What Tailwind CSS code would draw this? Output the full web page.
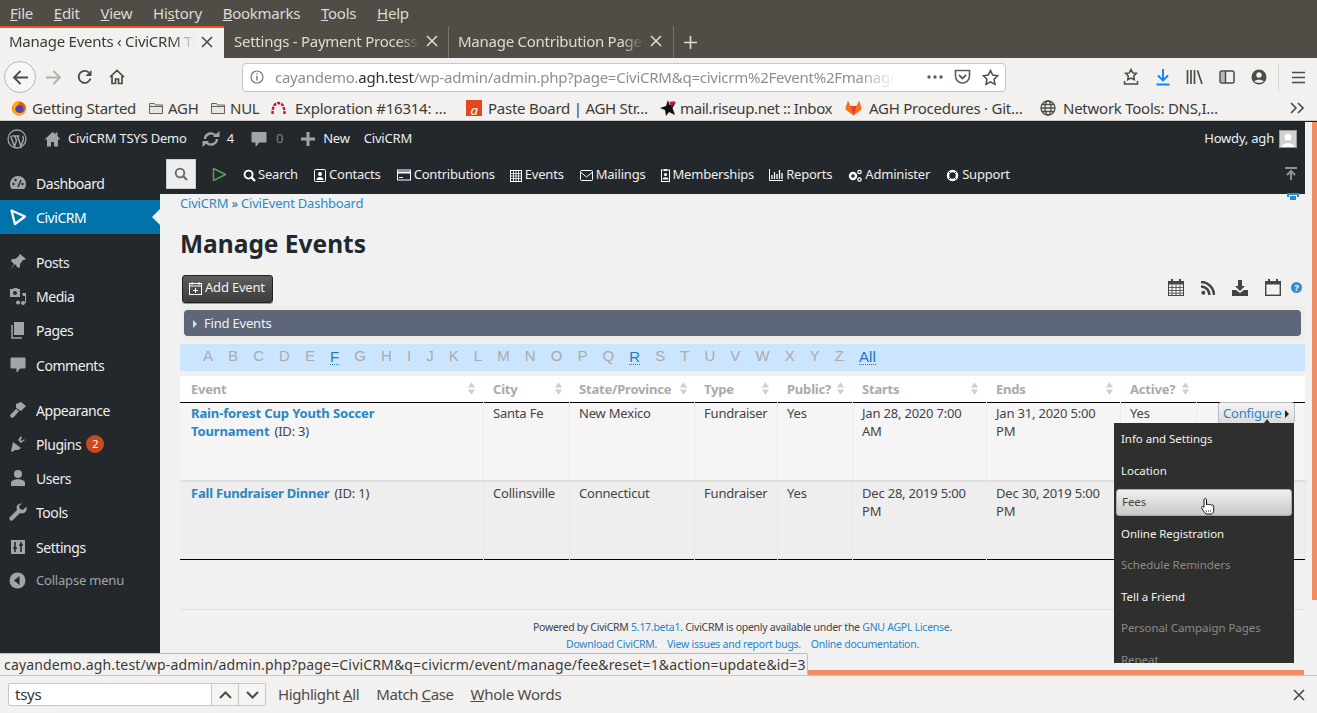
<!DOCTYPE html>
<html lang="en">
<head>
  <meta charset="UTF-8" />
  <meta name="viewport" content="width=device-width, initial-scale=1" />
  <title>Manage Events - CiviCRM TSYS Demo</title>
  <script src="https://cdn.jsdelivr.net/npm/@tailwindcss/browser@4"></script>
</head>
<body class="h-[713px] w-[1317px] overflow-hidden flex flex-col bg-[#f1f1f1] font-['Noto_Sans',sans-serif] text-[13px] tracking-[-0.2px] text-[#3e3e3e]">
  <svg class="hidden">
    <symbol id="sort" viewBox="0 0 10 16"><path d="M5 1 9 7H1zM5 15 1 9h8z" fill="#cfcfcf"/></symbol>
    <symbol id="folder" viewBox="0 0 16 16"><path d="M1.5 3.5h5l1 1.5h7v8.500h-13z" fill="#e8e6e1" stroke="#66635c"/><path d="M1.500 6.500h13" stroke="#66635c"/></symbol>
  </svg>

  <!-- Browser chrome -->
  <div class="shrink-0 bg-[#504d46]">
    <div class="h-[26px] flex items-center gap-[20.800px] pl-[10px] text-[15px] text-[#dedbd4] tracking-[-0.25px]">
      <span><u>F</u>ile</span><span><u>E</u>dit</span><span><u>V</u>iew</span><span>Hi<u>s</u>tory</span><span><u>B</u>ookmarks</span><span><u>T</u>ools</span><span><u>H</u>elp</span>
    </div>
    <div class="h-[32px] flex text-[15px] tracking-[-0.25px]">
      <div class="w-[224px] border-t-2 border-[#e95420] bg-[#f2f1ef] flex items-center pl-[9px] pr-[11px] pb-[3px] justify-between text-[#3c3b37]">
        <span class="w-[186px] overflow-hidden whitespace-nowrap [mask-image:linear-gradient(to_right,#000_88%,transparent)]">Manage Events ‹ CiviCRM TSYS Demo</span>
        <svg width="12" height="12" viewBox="0 0 12 12"><path d="M1 1l10 10M11 1 1 11" stroke="#4b4a46" stroke-width="1.600"/></svg>
      </div>
      <div class="w-[225px] border-r border-[#77746c] flex items-center pl-[10px] pr-[10px] pb-[2px] justify-between text-[#dedbd4]">
        <span class="w-[186px] overflow-hidden whitespace-nowrap [mask-image:linear-gradient(to_right,#000_88%,transparent)]">Settings - Payment Processors</span>
        <svg width="12" height="12" viewBox="0 0 12 12"><path d="M1 1l10 10M11 1 1 11" stroke="#dedbd4" stroke-width="1.600"/></svg>
      </div>
      <div class="w-[225px] border-r border-[#77746c] flex items-center pl-[9px] pr-[11px] pb-[2px] justify-between text-[#dedbd4]">
        <span class="w-[186px] overflow-hidden whitespace-nowrap [mask-image:linear-gradient(to_right,#000_88%,transparent)]">Manage Contribution Pages</span>
        <svg width="12" height="12" viewBox="0 0 12 12"><path d="M1 1l10 10M11 1 1 11" stroke="#dedbd4" stroke-width="1.600"/></svg>
      </div>
      <div class="flex items-center pl-[9px]"><svg width="15" height="15" viewBox="0 0 15 15"><path d="M7.500 1v13M1 7.500h13" stroke="#dedbd4" stroke-width="1.700"/></svg></div>
    </div>
  </div>

  <div class="shrink-0 h-[38px] bg-[#f2f1ef] flex items-center relative">
    <div class="ml-[4px] w-[32px] h-[32px] rounded-full border border-[#b9b7b2] bg-[#f8f7f6] flex items-center justify-center">
      <svg width="17" height="17" viewBox="0 0 17 17"><path d="M16 8.500H2M8.500 2 2 8.500 8.500 15" fill="none" stroke="#4c4b47" stroke-width="1.800"/></svg>
    </div>
    <svg class="ml-[9px]" width="17" height="17" viewBox="0 0 17 17"><path d="M1 8.500h14M8.500 2 15 8.500 8.500 15" fill="none" stroke="#b2b0ab" stroke-width="1.800"/></svg>
    <svg class="ml-[15px]" width="16" height="16" viewBox="0 0 16 16"><path d="M13.500 9.500A6 6 0 1 1 11.800 3.500" fill="none" stroke="#4c4b47" stroke-width="1.800"/><path d="M14.500 1v6h-6z" fill="#4c4b47"/></svg>
    <svg class="ml-[16px]" width="16" height="16" viewBox="0 0 16 16"><path d="M1 8 8 1.500 15 8M3 7v7.500h3.500V10h3v4.500H13V7" fill="none" stroke="#4c4b47" stroke-width="1.700"/></svg>
    <div class="ml-[117px] w-[764px] h-[29px] bg-white border border-[#c8c6c1] rounded-[4px] flex items-center text-[15px] tracking-[-0.25px] text-[#8f8e8a]">
      <svg class="ml-[7px] shrink-0" width="14" height="14" viewBox="0 0 14 14"><circle cx="7" cy="7" r="6" fill="none" stroke="#77766f" stroke-width="1.200"/><path d="M7 6v4.500M7 3.500v1.300" stroke="#77766f" stroke-width="1.400"/></svg>
      <span class="ml-[11px] w-[620px] overflow-hidden whitespace-nowrap [mask-image:linear-gradient(to_right,#000_94%,transparent)]">cayandemo.<span class="text-[#2f2f2c]">agh.test</span>/wp-admin/admin.php?page=CiviCRM&amp;q=civicrm%2Fevent%2Fmanage&amp;reset=1</span>
      <svg class="ml-[32px] shrink-0" width="16" height="4" viewBox="0 0 16 4"><circle cx="2" cy="2" r="1.700" fill="#5b5a55"/><circle cx="8" cy="2" r="1.700" fill="#5b5a55"/><circle cx="14" cy="2" r="1.700" fill="#5b5a55"/></svg>
      <svg class="ml-[11px] shrink-0" width="17" height="16" viewBox="0 0 17 16"><path d="M1.500 1.500h14V7a7 7 0 0 1-14 0z" fill="none" stroke="#5b5a55" stroke-width="1.600"/><path d="M5 6l3.500 3.500L12 6" fill="none" stroke="#5b5a55" stroke-width="1.800"/></svg>
      <svg class="ml-[11px] shrink-0" width="17" height="17" viewBox="0 0 17 17"><path d="M8.500 1.500l2.200 4.600 5 .7-3.600 3.500.9 5-4.500-2.400L4 15.300l.9-5L1.300 6.800l5-.7z" fill="none" stroke="#4c4b47" stroke-width="1.500"/></svg>
    </div>
    <svg class="ml-[117px]" width="16" height="18" viewBox="0 0 16 18"><path d="M8 1.500l1.700 3.400 3.700.5-2.700 2.600.6 3.700L8 10l-3.300 1.700.6-3.700L2.600 5.400l3.700-.5z" fill="none" stroke="#4c4b47" stroke-width="1.500"/><path d="M1.500 13v3h13v-3" fill="none" stroke="#4c4b47" stroke-width="1.500"/></svg>
    <svg class="ml-[16px]" width="16" height="18" viewBox="0 0 16 18"><path d="M8 1v11M3 7.500 8 12.500l5-5" fill="none" stroke="#0a84ff" stroke-width="1.900"/><path d="M1.500 16.500h13" stroke="#0a84ff" stroke-width="2"/></svg>
    <svg class="ml-[15px]" width="17" height="16" viewBox="0 0 17 16"><path d="M1.500 1v14M5 1v14M8.500 1v14M11.500 1.500l4.500 13.500" stroke="#4c4b47" stroke-width="1.700" fill="none"/></svg>
    <svg class="ml-[16px]" width="16" height="14" viewBox="0 0 16 14"><rect x="1" y="1" width="14" height="12" rx="2" fill="none" stroke="#4c4b47" stroke-width="1.500"/><path d="M2 2h4v10H2z" fill="#4c4b47" opacity=".35"/><path d="M6.500 1v12" stroke="#4c4b47" stroke-width="1.500"/></svg>
    <svg class="ml-[16px]" width="16" height="16" viewBox="0 0 16 16"><circle cx="8" cy="8" r="7.500" fill="#4c4b47"/><circle cx="8" cy="6" r="2.700" fill="#f2f1ef"/><path d="M3.300 12.500C4.500 10 11.500 10 12.700 12.500 11 14.300 5 14.300 3.300 12.500z" fill="#f2f1ef"/></svg>
    <div class="ml-[11px] w-px h-[28px] bg-[#d6d4cf]"></div>
    <svg class="ml-[13px]" width="13" height="13" viewBox="0 0 13 13"><path d="M0 1.500h13M0 6.500h13M0 11.500h13" stroke="#4c4b47" stroke-width="1.700"/></svg>
  </div>

  <div class="shrink-0 h-[25px] bg-[#f2f1ef] border-b border-[#cfcdc8] flex items-center whitespace-nowrap text-[15px] tracking-[-0.25px] text-[#3c3b37] relative">
    <svg class="ml-[11px]" width="16" height="16" viewBox="0 0 16 16"><circle cx="8" cy="8.500" r="7" fill="#e66000"/><circle cx="8.500" cy="9" r="4" fill="#5a3eb8"/><path d="M2 5C3 1 8 0 10 1c-2 .5-2.500 2-2.500 3S4 7 4 9 6 13 9 13c3 0 5-2 5-5 1 3-1 7-6 7.500C3 15.500 0 10 2 5z" fill="#ffb000"/></svg>
    <span class="ml-[5px] w-[116px]">Getting Started</span>
    <svg width="16" height="16"><use href="#folder"/></svg>
    <span class="ml-[4px] w-[42px]">AGH</span>
    <svg width="16" height="16"><use href="#folder"/></svg>
    <span class="ml-[4px] w-[41px]">NUL</span>
    <svg width="15" height="14" viewBox="0 0 15 14"><path d="M1.500 13C1.500 5 4 2 7.500 2S13.500 5 13.500 13" fill="none" stroke="#c8102e" stroke-width="2.400" stroke-dasharray="3 1.200"/></svg>
    <span class="ml-[9px] w-[171px]">Exploration #16314: …</span>
    <svg width="16" height="16" viewBox="0 0 16 16"><rect width="16" height="16" fill="#e0491a"/><text x="8" y="15" font-size="13" font-style="italic" fill="#fff" text-anchor="middle">a</text></svg>
    <span class="ml-[6px] w-[172px]">Paste Board | AGH Str…</span>
    <svg width="16" height="16" viewBox="0 0 16 16"><path d="M8 0l1.500 5L16 2l-3.500 6L15 15 9 12l-3 4-1-6-5-2 6-2z" fill="#111"/><path d="M9 2l6-1-3 6z" fill="#d6123c"/></svg>
    <span class="ml-[4px] w-[165px] tracking-[-0.4px]">mail.riseup.net :: Inbox</span>
    <svg width="17" height="16" viewBox="0 0 17 16"><path d="M8.500 15.500 1 10 .500 7.500 3 .500 5.500 6h6L14 .500l2.500 7L16 10z" fill="#fc6d26"/><path d="M8.500 15.500 5.500 6h6z" fill="#e24329"/></svg>
    <span class="ml-[7px] w-[171px]">AGH Procedures · Git…</span>
    <svg width="16" height="16" viewBox="0 0 16 16" fill="none" stroke="#4c4b47" stroke-width="1.300"><circle cx="8" cy="8" r="7"/><ellipse cx="8" cy="8" rx="3" ry="7"/><path d="M1 8h14M2 4.500h12M2 11.500h12"/></svg>
    <span class="ml-[7px] w-[227px]">Network Tools: DNS,I…</span>
    <svg width="14" height="12" viewBox="0 0 14 12"><path d="M1 1l5 5-5 5M8 1l5 5-5 5" fill="none" stroke="#4c4b47" stroke-width="1.600"/></svg>
  </div>

  <!-- Page viewport -->
  <div class="relative flex-1 min-h-0 overflow-hidden border-t border-[#1c1c1c] flex flex-col">
    <!-- WP admin bar -->
    <div class="shrink-0 h-[32px] w-[1305px] bg-[#23282d] flex items-center pt-[1px] text-[#eeeeee] whitespace-nowrap">
      <svg class="ml-[7px]" width="20" height="20" viewBox="0 0 20 20"><circle cx="10" cy="10" r="9" fill="none" stroke="#a0a5aa" stroke-width="1.300"/><path d="M3.500 7 7.500 17.500 9.500 11.500 8 7.500M8 7H5M7.500 7h5M10.500 7l3.500 10.500 2.300-7c.5-1.700-.3-3-1-3.500" fill="none" stroke="#a0a5aa" stroke-width="1.500"/></svg>
      <svg class="ml-[17px]" width="17" height="16" viewBox="0 0 17 16"><path d="M8.500 1 0.500 8.500h2.500V15.500h4v-4.500h3v4.500h4V8.500h2.500L13.500 5V1.500h-2v1.700z" fill="#a0a5aa"/></svg>
      <span class="ml-[7px]">CiviCRM TSYS Demo</span>
      <svg class="ml-[15px]" width="18" height="16" viewBox="0 0 18 16"><path d="M3 8a6 6 0 0 1 10.500-3.500M15 8a6 6 0 0 1-10.500 3.500" fill="none" stroke="#a0a5aa" stroke-width="2.400"/><path d="M11 6h6.500V0zM7 10H.5v6z" fill="#a0a5aa"/></svg>
      <span class="ml-[7px]">4</span>
      <svg class="ml-[17px]" width="16" height="16" viewBox="0 0 16 16"><path d="M1 1.500h14V11H8l-3 4v-4H1z" fill="#a0a5aa" stroke="#a0a5aa" stroke-linejoin="round"/></svg>
      <span class="ml-[9px] text-[#7d8287]">0</span>
      <svg class="ml-[18px]" width="14" height="14" viewBox="0 0 14 14"><path d="M7 0v14M0 7h14" stroke="#a0a5aa" stroke-width="3"/></svg>
      <span class="ml-[8px]">New</span>
      <span class="ml-[14px]">CiviCRM</span>
      <span class="ml-auto">Howdy, agh</span>
      <div class="ml-[5px] mr-[8px] w-[18px] h-[18px] bg-[#d0d0d0] border border-[#999] flex items-end justify-center overflow-hidden">
        <svg width="14" height="15" viewBox="0 0 14 15"><circle cx="7" cy="5" r="3.500" fill="#fff"/><path d="M1 15c0-5 12-5 12 0z" fill="#fff"/></svg>
      </div>
    </div>

    <div class="flex flex-1 min-h-0">
      <!-- Sidebar -->
      <nav class="w-[160px] shrink-0 bg-[#23282d] pt-[12px] text-[14px] tracking-[-0.45px] text-[#eeeeee] whitespace-nowrap">
        <a class="h-[34px] flex items-center gap-[9px] pl-[9px]"><svg width="18" height="18" viewBox="0 0 18 18"><path d="M9 2a8 8 0 0 0-8 8c0 2 .7 3.700 1.700 5h12.600A8 8 0 0 0 17 10a8 8 0 0 0-8-8z" fill="#a0a5aa"/><path d="M9 13 12 6" stroke="#23282d" stroke-width="1.500"/><circle cx="4.500" cy="10" r="1.200" fill="#23282d"/><circle cx="6.500" cy="6" r="1.200" fill="#23282d"/><circle cx="13.500" cy="10" r="1.200" fill="#23282d"/></svg>Dashboard</a>
        <a class="relative h-[34px] flex items-center gap-[9px] pl-[9px] bg-[#0073aa] text-white"><svg width="18" height="18" viewBox="0 0 18 18"><path d="M2.500 2.500 16 8.500 6 16z" fill="none" stroke="#fff" stroke-width="2.300" stroke-linejoin="round"/></svg>CiviCRM<span class="absolute right-0 top-[9px] border-y-[8px] border-r-[8px] border-y-transparent border-r-[#f1f1f1]"></span></a>
        <a class="mt-[11px] h-[34px] flex items-center gap-[9px] pl-[9px]"><svg width="18" height="18" viewBox="0 0 18 18"><path d="M11 1l6 5-2 1-1 0-3 4 0 3-2 1-3-4-5 6 4-6-3-3 1-2 3 0 4-3 0-1z" fill="#a0a5aa"/></svg>Posts</a>
        <a class="h-[34px] flex items-center gap-[9px] pl-[9px]"><svg width="18" height="18" viewBox="0 0 18 18"><path d="M1 2h3l1-1h3l1 1h2v8H1z" fill="#a0a5aa"/><circle cx="6" cy="6" r="2" fill="#23282d"/><path d="M13 6h4v10h-1v-7h-2zM9 13.500a2 2 0 1 0 .1 0zM14 14a2 2 0 1 0 .1 0z" fill="#a0a5aa"/></svg>Media</a>
        <a class="h-[34px] flex items-center gap-[9px] pl-[9px]"><svg width="18" height="18" viewBox="0 0 18 18"><path d="M5 1h10v13H5z" fill="#a0a5aa"/><path d="M3 4v13h10" fill="none" stroke="#a0a5aa" stroke-width="1.500"/></svg>Pages</a>
        <a class="mt-px h-[34px] flex items-center gap-[9px] pl-[9px]"><svg width="18" height="18" viewBox="0 0 18 18"><path d="M2 2h14v10h-5l-3 4v-4H2z" fill="#a0a5aa" stroke="#a0a5aa" stroke-linejoin="round"/></svg>Comments</a>
        <a class="mt-[11px] h-[34px] flex items-center gap-[9px] pl-[9px]"><svg width="18" height="18" viewBox="0 0 18 18"><path d="M7 3 12 1l5 4-5 5-5-3zM7 8l3 2-5 6-3 1-1-3z" fill="#a0a5aa"/></svg>Appearance</a>
        <a class="h-[34px] flex items-center gap-[9px] pl-[9px]"><svg width="18" height="18" viewBox="0 0 18 18"><path d="M12 1 9 5l3 3 4-3-1-.8-2.500 1.800-1-1L13 3zM4 7l8 6-3 2H6l-3 2-1-1 1-4z" fill="#a0a5aa"/></svg>Plugins<span class="-ml-[4px] w-[18px] h-[18px] rounded-full bg-[#ca4a1f] text-white text-[11px] flex items-center justify-center">2</span></a>
        <a class="h-[34px] flex items-center gap-[9px] pl-[9px]"><svg width="18" height="18" viewBox="0 0 18 18"><circle cx="9" cy="5" r="4" fill="#a0a5aa"/><path d="M2 17v-3c0-5 14-5 14 0v3z" fill="#a0a5aa"/></svg>Users</a>
        <a class="h-[34px] flex items-center gap-[9px] pl-[9px]"><svg width="18" height="18" viewBox="0 0 18 18"><path d="M17 4l-3 3-3-1-1-3 3-2.500c-2.500-.5-5.500 1-5.500 4.500l.5 2-7 7c-1 1-1 2 0 3s2 1 3 0l7-7 2 .5c3.500 0 5-3 4.500-6.500z" fill="#a0a5aa"/></svg>Tools</a>
        <a class="mt-px h-[34px] flex items-center gap-[9px] pl-[9px]"><svg width="18" height="18" viewBox="0 0 18 18"><path d="M2 2h14v14H2z" fill="#a0a5aa"/><path d="M6 4v10M12 4v10M4 10h4M10 7h4" stroke="#23282d" stroke-width="1.600"/></svg>Settings</a>
        <a class="h-[33px] flex items-center gap-[10px] pl-[9px] text-[13px] tracking-[-0.2px] text-[#a0a5aa]"><svg width="17" height="17" viewBox="0 0 17 17"><circle cx="8.500" cy="8.500" r="8" fill="#a0a5aa"/><path d="M10.500 4v9L5 8.500z" fill="#23282d"/></svg>Collapse menu</a>
      </nav>

      <div class="flex-1 min-w-0 flex">
        <main class="w-[1145px] shrink-0 flex flex-col">
          <!-- CiviCRM menu bar -->
          <div class="shrink-0 h-[40px] bg-[#23282d] flex items-center pl-[6px] text-[#eeeeee] whitespace-nowrap">
            <div class="w-[30px] h-[30px] bg-[#eeeeee] border border-[#cfcfcf] flex items-center justify-center"><svg width="14" height="14" viewBox="0 0 14 14"><circle cx="6" cy="6" r="4.300" fill="none" stroke="#666" stroke-width="1.800"/><path d="M9 9l4 4" stroke="#666" stroke-width="2.200"/></svg></div>
            <svg class="ml-[16px]" width="15" height="15" viewBox="0 0 15 15"><path d="M1.500 1.500 13.500 7.500 1.500 13.500z" fill="none" stroke="#4ba54a" stroke-width="1.500" stroke-linejoin="round"/></svg>
            <span class="ml-[16px] pt-[2px] flex items-center gap-[2px]"><svg width="13" height="13" viewBox="0 0 14 14"><circle cx="6" cy="6" r="4.300" fill="none" stroke="#fff" stroke-width="2"/><path d="M9 9l4 4" stroke="#fff" stroke-width="2.400"/></svg>Search</span>
            <span class="ml-[16px] pt-[2px] flex items-center gap-[3px]"><svg width="12" height="13" viewBox="0 0 12 13"><rect x=".5" y=".5" width="11" height="12" rx="1" fill="none" stroke="#fff"/><circle cx="6" cy="5" r="2" fill="#fff"/><path d="M2.500 11c0-4 7-4 7 0z" fill="#fff"/></svg>Contacts</span>
            <span class="ml-[16px] pt-[2px] flex items-center gap-[3px]"><svg width="14" height="12" viewBox="0 0 14 12"><rect x=".5" y="1" width="13" height="10" fill="none" stroke="#fff"/><path d="M1 3.500h12" stroke="#fff" stroke-width="2"/><path d="M2 8.500h4" stroke="#fff"/></svg>Contributions</span>
            <span class="ml-[15px] pt-[2px] flex items-center gap-[3px]"><svg width="12" height="13" viewBox="0 0 12 13"><rect x=".5" y="1.500" width="11" height="11" fill="none" stroke="#fff"/><path d="M.5 4.500h11M.5 7h11M.5 9.500h11M3.500 1v12M6 1v12M8.500 1v12" stroke="#fff" stroke-width=".8"/></svg>Events</span>
            <span class="ml-[16px] pt-[2px] flex items-center gap-[3px]"><svg width="13" height="11" viewBox="0 0 13 11"><rect x=".5" y=".5" width="12" height="10" rx="1" fill="none" stroke="#fff"/><path d="M1 2.500 6.500 7 12 2.500" fill="none" stroke="#fff"/></svg>Mailings</span>
            <span class="ml-[15px] pt-[2px] flex items-center gap-[3px]"><svg width="9" height="13" viewBox="0 0 9 13"><rect x=".5" y="1" width="8" height="11.500" fill="none" stroke="#fff"/><circle cx="4.500" cy="5.500" r="1.600" fill="#fff"/><path d="M1.500 10.500c0-3 6-3 6 0z" fill="#fff"/><path d="M3 0h3v2H3z" fill="#fff"/></svg>Memberships</span>
            <span class="ml-[15px] pt-[2px] flex items-center gap-[3px]"><svg width="14" height="12" viewBox="0 0 14 12"><path d="M.5 0v11.500H14" fill="none" stroke="#fff"/><path d="M3 6v4M5.500 3v7M8 5v5M10.500 1v9M13 4v6" stroke="#fff" stroke-width="1.300"/></svg>Reports</span>
            <span class="ml-[16px] pt-[2px] flex items-center gap-[3px]"><svg width="14" height="13" viewBox="0 0 14 13"><circle cx="5" cy="7" r="3" fill="none" stroke="#fff" stroke-width="2.400"/><circle cx="11.500" cy="3" r="1.700" fill="none" stroke="#fff" stroke-width="1.200"/><circle cx="11.500" cy="10.500" r="1.700" fill="none" stroke="#fff" stroke-width="1.200"/></svg>Administer</span>
            <span class="ml-[16px] pt-[2px] flex items-center gap-[3px]"><svg width="13" height="13" viewBox="0 0 13 13"><circle cx="6.500" cy="6.500" r="4.500" fill="none" stroke="#fff" stroke-width="2.500"/><path d="M3 3l2 2M10 3 8 5M3 10l2-2M10 10 8 8" stroke="#23282d"/></svg>Support</span>
            <svg class="ml-auto mr-[8px]" width="12" height="14" viewBox="0 0 12 14"><path d="M0 1h12" stroke="#8c9196" stroke-width="2"/><path d="M6 13V5M2 8l4-4 4 4" fill="none" stroke="#8c9196" stroke-width="2"/></svg>
          </div>

          <div class="relative flex-1 min-h-0 pl-[20px]">
            <div class="h-[18px] leading-[18px] text-[#2a8ac5]">CiviCRM <span class="text-[#2271a8]">»</span> CiviEvent Dashboard</div>
            <svg class="absolute right-[6px] -top-[1px]" width="12" height="7" viewBox="0 0 12 7"><path d="M0 0h12v4h-2V2H2v2H0zM3 3h6v4H3z" fill="#2a8ac5"/></svg>
            <h1 class="mt-[16px] text-[24.500px] font-bold leading-[31px] text-[#23282d] tracking-normal">Manage Events</h1>

            <div class="mt-[16px] flex items-start justify-between">
              <button class="ml-[2px] h-[28px] w-[91px] rounded-[3px] border border-[#222] bg-gradient-to-b from-[#5e5e5e] to-[#3c3c3c] text-[#f1f1f1] flex items-center gap-[3px] pl-[6px] pb-[2px] shadow-[0_1px_0_#999]">
                <svg width="13" height="13" viewBox="0 0 13 13"><rect x=".5" y="1.500" width="12" height="11" fill="none" stroke="#fff"/><path d="M.5 4h12M3 0v3M10 0v3" stroke="#fff"/><path d="M6.500 6v5M4 8.500h5" stroke="#fff"/></svg>Add Event
              </button>
              <div class="flex items-center pt-[4px] mr-[3px]">
                <svg width="16" height="17" viewBox="0 0 16 17"><rect x=".5" y="2.500" width="15" height="14" fill="none" stroke="#444"/><path d="M.5 2.500h15v3H.5z" fill="#444"/><path d="M.5 8.500h15M.5 11.500h15M.5 14.200h15M4 6v10M8 6v10M12 6v10" stroke="#444" stroke-width=".8"/><path d="M4 0v4M12 0v4" stroke="#444" stroke-width="2"/></svg>
                <svg class="ml-[17px]" width="14" height="14" viewBox="0 0 14 14"><circle cx="2.300" cy="11.700" r="2" fill="#444"/><path d="M0 5.500a8.500 8.500 0 0 1 8.500 8.500M0 1a13 13 0 0 1 13 13" fill="none" stroke="#444" stroke-width="2.600"/></svg>
                <svg class="ml-[17px]" width="16" height="16" viewBox="0 0 16 16"><path d="M6 0h4v6h3l-5 5-5-5h3z" fill="#444"/><path d="M0 10h4l4 3 4-3h4v6H0z" fill="#444"/></svg>
                <svg class="ml-[17px]" width="16" height="17" viewBox="0 0 16 17"><rect x=".7" y="2.700" width="14.600" height="13.600" fill="none" stroke="#444" stroke-width="1.400"/><path d="M.5 3h15v2.500H.5z" fill="#444"/><path d="M4 0v4M12 0v4" stroke="#444" stroke-width="2"/></svg>
                <svg class="ml-[10px]" width="11" height="11" viewBox="0 0 11 11"><circle cx="5.500" cy="5.500" r="5.500" fill="#3a8cc7"/><text x="5.500" y="8.700" font-size="9" font-weight="700" fill="#fff" text-anchor="middle">?</text></svg>
              </div>
            </div>

            <div class="mt-[3px] ml-[1px] h-[34px] bg-[#eeeee8] p-[4px_4px_4px_3px]">
              <div class="h-[26px] rounded-[4px] bg-[#5d6779] text-[#f2f2f2] flex items-center pl-[9px] pt-[2px]"><span class="border-y-[4px] border-l-[4px] border-y-transparent border-l-[#ddd] mr-[7px]"></span>Find Events</div>
            </div>

            <div class="mt-[4px] h-[27px] bg-[#cce5ff] flex items-center gap-[15.070px] pl-[23px] pb-[2px] font-['Liberation_Sans',sans-serif] text-[15px] tracking-normal text-[#aaaaaa]">
              <span>A</span><span>B</span><span>C</span><span>D</span><span>E</span><span class="text-[#2a7ab8] border-b border-dotted border-[#2a7ab8] leading-[15px]">F</span><span>G</span><span>H</span><span>I</span><span>J</span><span>K</span><span>L</span><span>M</span><span>N</span><span>O</span><span>P</span><span>Q</span><span class="text-[#2a7ab8] border-b border-dotted border-[#2a7ab8] leading-[15px]">R</span><span>S</span><span>T</span><span>U</span><span>V</span><span>W</span><span>X</span><span>Y</span><span>Z</span><span class="text-[#1a73c8] border-b border-dotted border-[#1a73c8] leading-[15px]">All</span>
            </div>

            <table class="mt-[5px] w-[1125px] table-fixed border-collapse">
              <colgroup><col class="w-[303px]"/><col class="w-[86px]"/><col class="w-[125px]"/><col class="w-[83px]"/><col class="w-[75px]"/><col class="w-[134px]"/><col class="w-[134px]"/><col class="w-[76px]"/><col class="w-[109px]"/></colgroup>
              <thead class="bg-white text-[#aaaaaa] font-bold border-b-[1.500px] border-black">
                <tr class="h-[26px] text-left [&>th]:pt-[2px]">
                  <th class="pl-[11px] relative">Event<svg class="absolute right-[7px] top-[5px]" width="9" height="15"><use href="#sort"/></svg></th>
                  <th class="pl-[10px] relative">City<svg class="absolute right-[6px] top-[5px]" width="9" height="15"><use href="#sort"/></svg></th>
                  <th class="pl-[10px] relative">State/Province<svg class="absolute right-[6px] top-[5px]" width="9" height="15"><use href="#sort"/></svg></th>
                  <th class="pl-[10px] relative">Type<svg class="absolute right-[7px] top-[5px]" width="9" height="15"><use href="#sort"/></svg></th>
                  <th class="pl-[10px] relative">Public?<svg class="absolute right-[7px] top-[5px]" width="9" height="15"><use href="#sort"/></svg></th>
                  <th class="pl-[10px] relative">Starts<svg class="absolute right-[7px] top-[5px]" width="9" height="15"><use href="#sort"/></svg></th>
                  <th class="pl-[10px] relative">Ends<svg class="absolute right-[6px] top-[5px]" width="9" height="15"><use href="#sort"/></svg></th>
                  <th class="pl-[10px] relative">Active?<svg class="absolute right-[6px] top-[5px]" width="9" height="15"><use href="#sort"/></svg></th>
                  <th></th>
                </tr>
              </thead>
              <tbody class="align-top leading-[18px] text-[#444]">
                <tr class="h-[79px] bg-[#f5f5f5] border-b-2 border-[#e0e0e0] [&>td]:pt-[1px] [&>td]:pl-[9.500px] [&>td]:border-r [&>td]:border-[#ebebeb]">
                  <td class="!pl-[11px]"><a class="font-bold tracking-[-0.13px] text-[#2a86c2]">Rain-forest Cup Youth Soccer<br/>Tournament</a><span class="ml-[5px]">(ID: 3)</span></td>
                  <td>Santa Fe</td><td>New Mexico</td><td>Fundraiser</td><td>Yes</td><td>Jan 28, 2020 7:00<br/>AM</td><td>Jan 31, 2020 5:00<br/>PM</td><td>Yes</td><td></td>
                </tr>
                <tr class="h-[78px] bg-[#eeeeee] border-b-[1.500px] border-black [&>td]:pt-[2px] [&>td]:pl-[9.500px] [&>td]:border-r [&>td]:border-[#e8e8e8]">
                  <td class="!pl-[11px]"><a class="font-bold text-[#2a86c2]">Fall Fundraiser Dinner</a><span class="ml-[5px]">(ID: 1)</span></td>
                  <td>Collinsville</td><td>Connecticut</td><td>Fundraiser</td><td>Yes</td><td>Dec 28, 2019 5:00<br/>PM</td><td>Dec 30, 2019 5:00<br/>PM</td><td></td><td></td>
                </tr>
              </tbody>
            </table>

            <div class="mt-[49px] border-t border-[#e0e0e0] w-[1125px] pt-[9px] text-center text-[10.500px] tracking-[-0.26px] leading-[17px] text-[#444]">
              <p>Powered by CiviCRM <span class="text-[#2a86c2]">5.17.beta1</span>. CiviCRM is openly available under the <span class="text-[#2a86c2]">GNU AGPL License</span>.</p>
              <p class="text-[#2a86c2]">Download CiviCRM. &nbsp; &nbsp;View issues and report bugs. &nbsp; &nbsp;Online documentation.</p>
            </div>

            <!-- Configure dropdown -->
            <button class="absolute left-[1058px] top-[208px] h-[22px] w-[77px] rounded-[3px] border border-[#bbb] bg-gradient-to-b from-[#f4f4f4] to-[#dcdcdc] text-[#2a86c2] flex items-center pl-[4px] pt-[2px] gap-[3px]">Configure<span class="border-y-[4px] border-l-[4px] border-y-transparent border-l-[#222]"></span></button>
            <span class="absolute left-[1104px] top-[225px] border-x-[3px] border-b-[4px] border-x-transparent border-b-[#2f2f2d]"></span>
            <div class="absolute left-[954px] top-[229px] w-[180px] h-[240px] overflow-hidden bg-[#2f2f2d] text-[11.500px] tracking-[-0.05px] text-[#f1f1f1] whitespace-nowrap">
              <div class="h-[32px] pl-[7px] flex items-center">Info and Settings</div>
              <div class="h-[32px] pl-[7px] flex items-center">Location</div>
              <div class="mt-[2px] mx-[2px] h-[27px] pl-[5px] pb-[2px] rounded-[3px] border border-[#aaa] bg-gradient-to-b from-[#f0f0f0] to-[#c8c8c8] text-[#444] flex items-center">Fees</div>
              <div class="mt-[2px] h-[32px] pl-[7px] flex items-center">Online Registration</div>
              <div class="h-[31px] pl-[7px] pb-[2px] flex items-center text-[#8a8a8a]">Schedule Reminders</div>
              <div class="h-[32px] pl-[7px] flex items-center">Tell a Friend</div>
              <div class="h-[31px] pl-[7px] pb-[2px] flex items-center text-[#8a8a8a]">Personal Campaign Pages</div>
              <div class="h-[32px] pl-[7px] flex items-center text-[#8a8a8a]">Repeat</div>
            </div>
            <svg class="absolute left-[1040px] top-[303px]" width="16" height="18" viewBox="0 0 16 18"><path d="M5 1.500c1 0 1.500.5 1.500 1.500v5c.5-1 2-1 2.500 0 .5-.7 2-.7 2.500.2.700-.5 2.200-.2 2.200 1V13c0 2-1 3.500-2 4H6c-1-1-4-5-4.500-6.500 0-1 1.500-1.500 2.500-.2V3c0-1 .5-1.500 1-1.500z" fill="#fff" stroke="#111" stroke-linejoin="round"/><path d="M6.500 13.500v2M8.500 13.500v2M10.500 13.500v2" stroke="#111" stroke-dasharray="1 1"/></svg>
          </div>
        </main>
      </div>
    </div>

    <!-- Orange page stripes, link status -->
    <div class="absolute right-0 top-0 w-[5px] h-[478px] bg-[#f48c66]"></div>
    <div class="absolute left-[160px] top-[548px] w-[1144px] h-[5px] bg-[#f48c66]"></div>
    <div class="absolute left-0 top-[531px] w-[808px] h-[23px] bg-[#f2f1ef] border-y border-r border-[#c0beb9] rounded-tr-[2px] flex items-center pl-[4px] text-[14px] tracking-[0.16px] text-[#3c3b37] whitespace-nowrap">cayandemo.agh.test/wp-admin/admin.php?page=CiviCRM&amp;q=civicrm/event/manage/fee&amp;reset=1&amp;action=update&amp;id=3</div>
  </div>

  <!-- Find bar -->
  <div class="shrink-0 h-[38px] bg-[#f2f1ef] border-t border-[#c8c6c1] flex items-center text-[15px] tracking-[-0.25px] text-[#4c4b47] whitespace-nowrap relative">
    <div class="ml-[8px] w-[204px] h-[23px] bg-white border border-[#c8c6c1] rounded-l-[2px] flex items-center pl-[6px] text-[#333]">tsys</div>
    <div class="w-[27px] h-[23px] border-y border-r border-[#c8c6c1] bg-[#f6f5f3] flex items-center justify-center"><svg width="13" height="8" viewBox="0 0 13 8"><path d="M1 7 6.500 1.500 12 7" fill="none" stroke="#4c4b47" stroke-width="2"/></svg></div>
    <div class="w-[27px] h-[23px] border-y border-r border-[#c8c6c1] bg-[#f6f5f3] rounded-r-[2px] flex items-center justify-center"><svg width="13" height="8" viewBox="0 0 13 8"><path d="M1 1 6.500 6.500 12 1" fill="none" stroke="#4c4b47" stroke-width="2"/></svg></div>
    <span class="ml-[12px] tracking-[-0.4px]">Highlight <u>A</u>ll</span>
    <span class="ml-[17px] tracking-[-0.4px]">Match <u>C</u>ase</span>
    <span class="ml-[17px]"><u>W</u>hole Words</span>
    <svg class="ml-auto mr-[12px]" width="12" height="12" viewBox="0 0 12 12"><path d="M1 1l10 10M11 1 1 11" stroke="#4b4a46" stroke-width="1.600"/></svg>
  </div>
</body>
</html>
